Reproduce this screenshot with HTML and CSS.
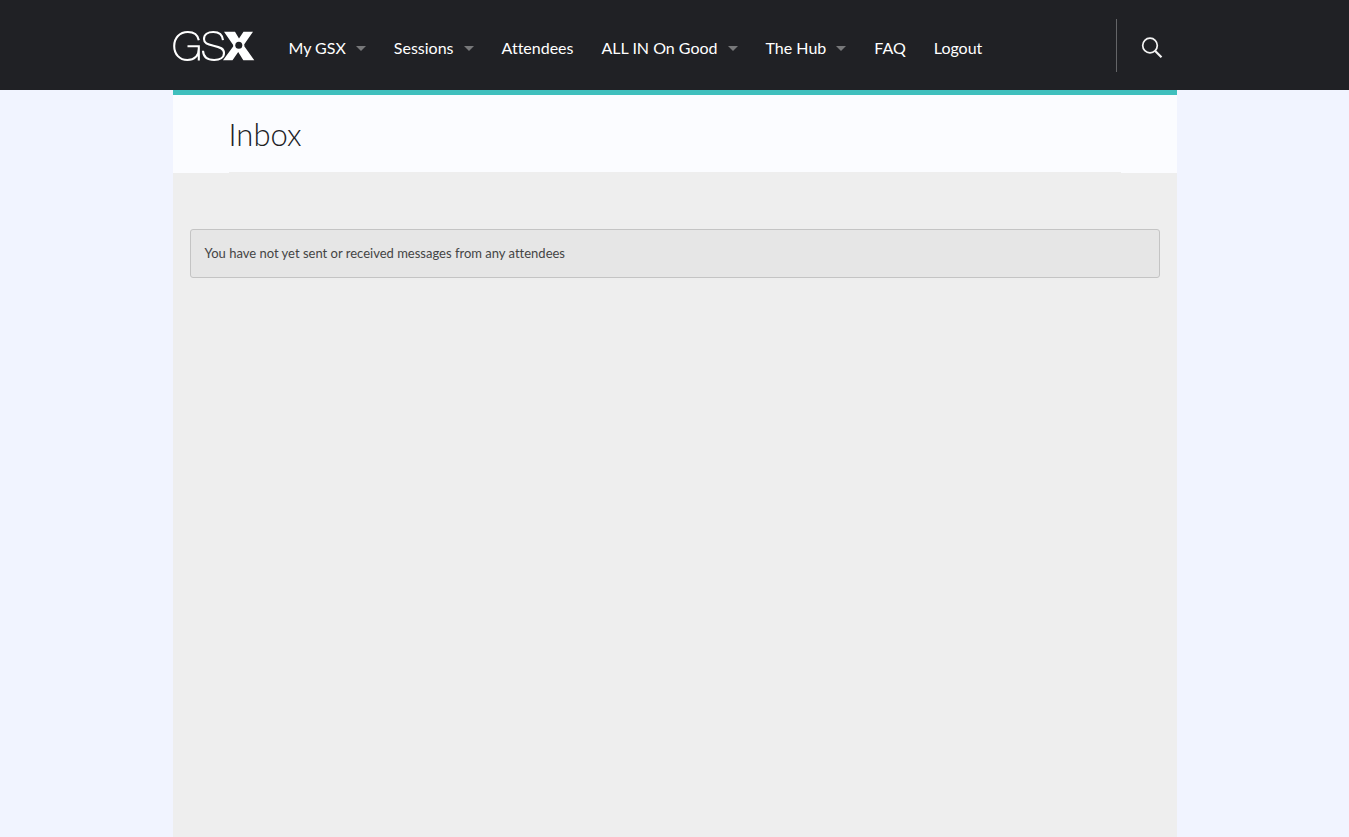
FILE: index.html
```html
<!DOCTYPE html>
<html lang="en">
<head>
<meta charset="utf-8">
<meta name="viewport" content="width=device-width, initial-scale=1">
<title>Inbox - GSX</title>
<link rel="stylesheet" href="styles.css">
</head>
<body>
<header class="site-header">
  <div class="header-inner">
    <a class="logo" href="#" aria-label="GSX home">
      <svg width="82" height="32" viewBox="0 0 82 32" aria-hidden="true">
        <g fill="none" stroke="#fff" stroke-width="2.1">
          <path d="M25.800 10.200C24.800 4.900 20.700 2 14.800 2C6.600 2 1.200 7.800 1.200 16C1.200 24.300 6.600 30 14.400 30C21.200 30 25.800 26 25.800 18.800V16.200H14.500M25.800 17V30.500"/>
          <path d="M50 10.200C49.500 4.600 45.900 2 40.300 2C34.700 2 31 4.700 31 9C31 13.200 34.100 14.400 40.500 15.700C47.300 17.100 51 18.700 51 23C51 27.500 46.900 30 41.200 30C34.600 30 30.300 26.900 30 20.800"/>
        </g>
        <path fill="#fff" d="M51 1.800H62L66 8.600L70.500 1.800H80L70.600 15.200L81.300 30.300H70.300L65.200 22L59.500 30.300H50L60.700 15.700Z"/>
        <circle cx="65.800" cy="15.300" r="5.500" fill="#fff"/>
        <circle cx="65.800" cy="15.300" r="3.500" fill="#202125"/>
      </svg>
    </a>
    <nav class="main-nav" aria-label="Main">
      <a class="nav-link has-menu" href="#">My GSX</a>
      <a class="nav-link has-menu" href="#">Sessions</a>
      <a class="nav-link" href="#">Attendees</a>
      <a class="nav-link has-menu" href="#">ALL IN On Good</a>
      <a class="nav-link has-menu" href="#">The Hub</a>
      <a class="nav-link" href="#">FAQ</a>
      <a class="nav-link" href="#">Logout</a>
    </nav>
    <button class="search-button" type="button" aria-label="Search">
      <svg width="22" height="22" viewBox="0 0 22 22" fill="none" stroke="#f4f4f4" aria-hidden="true">
        <circle cx="9" cy="8.500" r="7.300" stroke-width="1.700"/>
        <path d="M14.200 14L20.500 20.300" stroke-width="2.200"/>
      </svg>
    </button>
  </div>
</header>
<main class="page">
  <div class="page-heading">
    <h1 class="page-title">Inbox</h1>
  </div>
  <div class="page-body">
    <p class="notice">You have not yet sent or received messages from any attendees</p>
  </div>
</main>
</body>
</html>
```
FILE: styles.css
```css
* {
  box-sizing: border-box;
}

body {
  display: flex;
  flex-direction: column;
  min-height: 100vh;
  margin: 0;
  background: #f1f4ff;
  color: #202125;
  font-family: Lato, "Liberation Sans", sans-serif;
  font-variant-ligatures: none;
}

.site-header {
  background: #202125;
}

.header-inner {
  display: flex;
  align-items: center;
  max-width: 1004px;
  min-height: 90px;
  margin: 0 auto;
}

.logo {
  display: flex;
  margin-right: 34px;
  padding-top: 2px;
}

.main-nav {
  display: flex;
  flex-wrap: wrap;
  gap: 8px 28px;
  padding-top: 6px;
}

.nav-link {
  display: flex;
  align-items: center;
  gap: 10px;
  color: #fff;
  font-size: 16px;
  font-weight: 400;
  line-height: 20px;
  text-decoration: none;
  white-space: nowrap;
}

.has-menu::after {
  content: "";
  border: solid transparent;
  border-width: 5px 5px 0;
  border-top-color: #77787a;
}

.search-button {
  display: flex;
  align-items: center;
  height: 53px;
  margin-left: auto;
  padding: 6px 14px 0 24px;
  border: 0;
  border-left: 1px solid #646568;
  background: none;
  cursor: pointer;
}

.page {
  display: flex;
  flex: 1;
  flex-direction: column;
  width: 100%;
  max-width: 1004px;
  margin: 0 auto;
  border-top: 5px solid #3fbfbd;
  background: #eee;
}

.page-heading {
  padding: 0 56px;
  background: #fbfcff;
}

.page-title {
  margin: 0;
  padding: 19px 0 18px;
  border-bottom: 1px solid #eee;
  font-size: 31px;
  font-weight: 300;
  line-height: 40px;
}

.page-body {
  padding: 56px 17px;
}

.notice {
  margin: 0;
  padding: 13px 14px 14px;
  border: 1px solid #c4c4c4;
  border-radius: 3px;
  background: #e6e6e6;
  color: #444;
  font-size: 13px;
  line-height: 20px;
}
```
